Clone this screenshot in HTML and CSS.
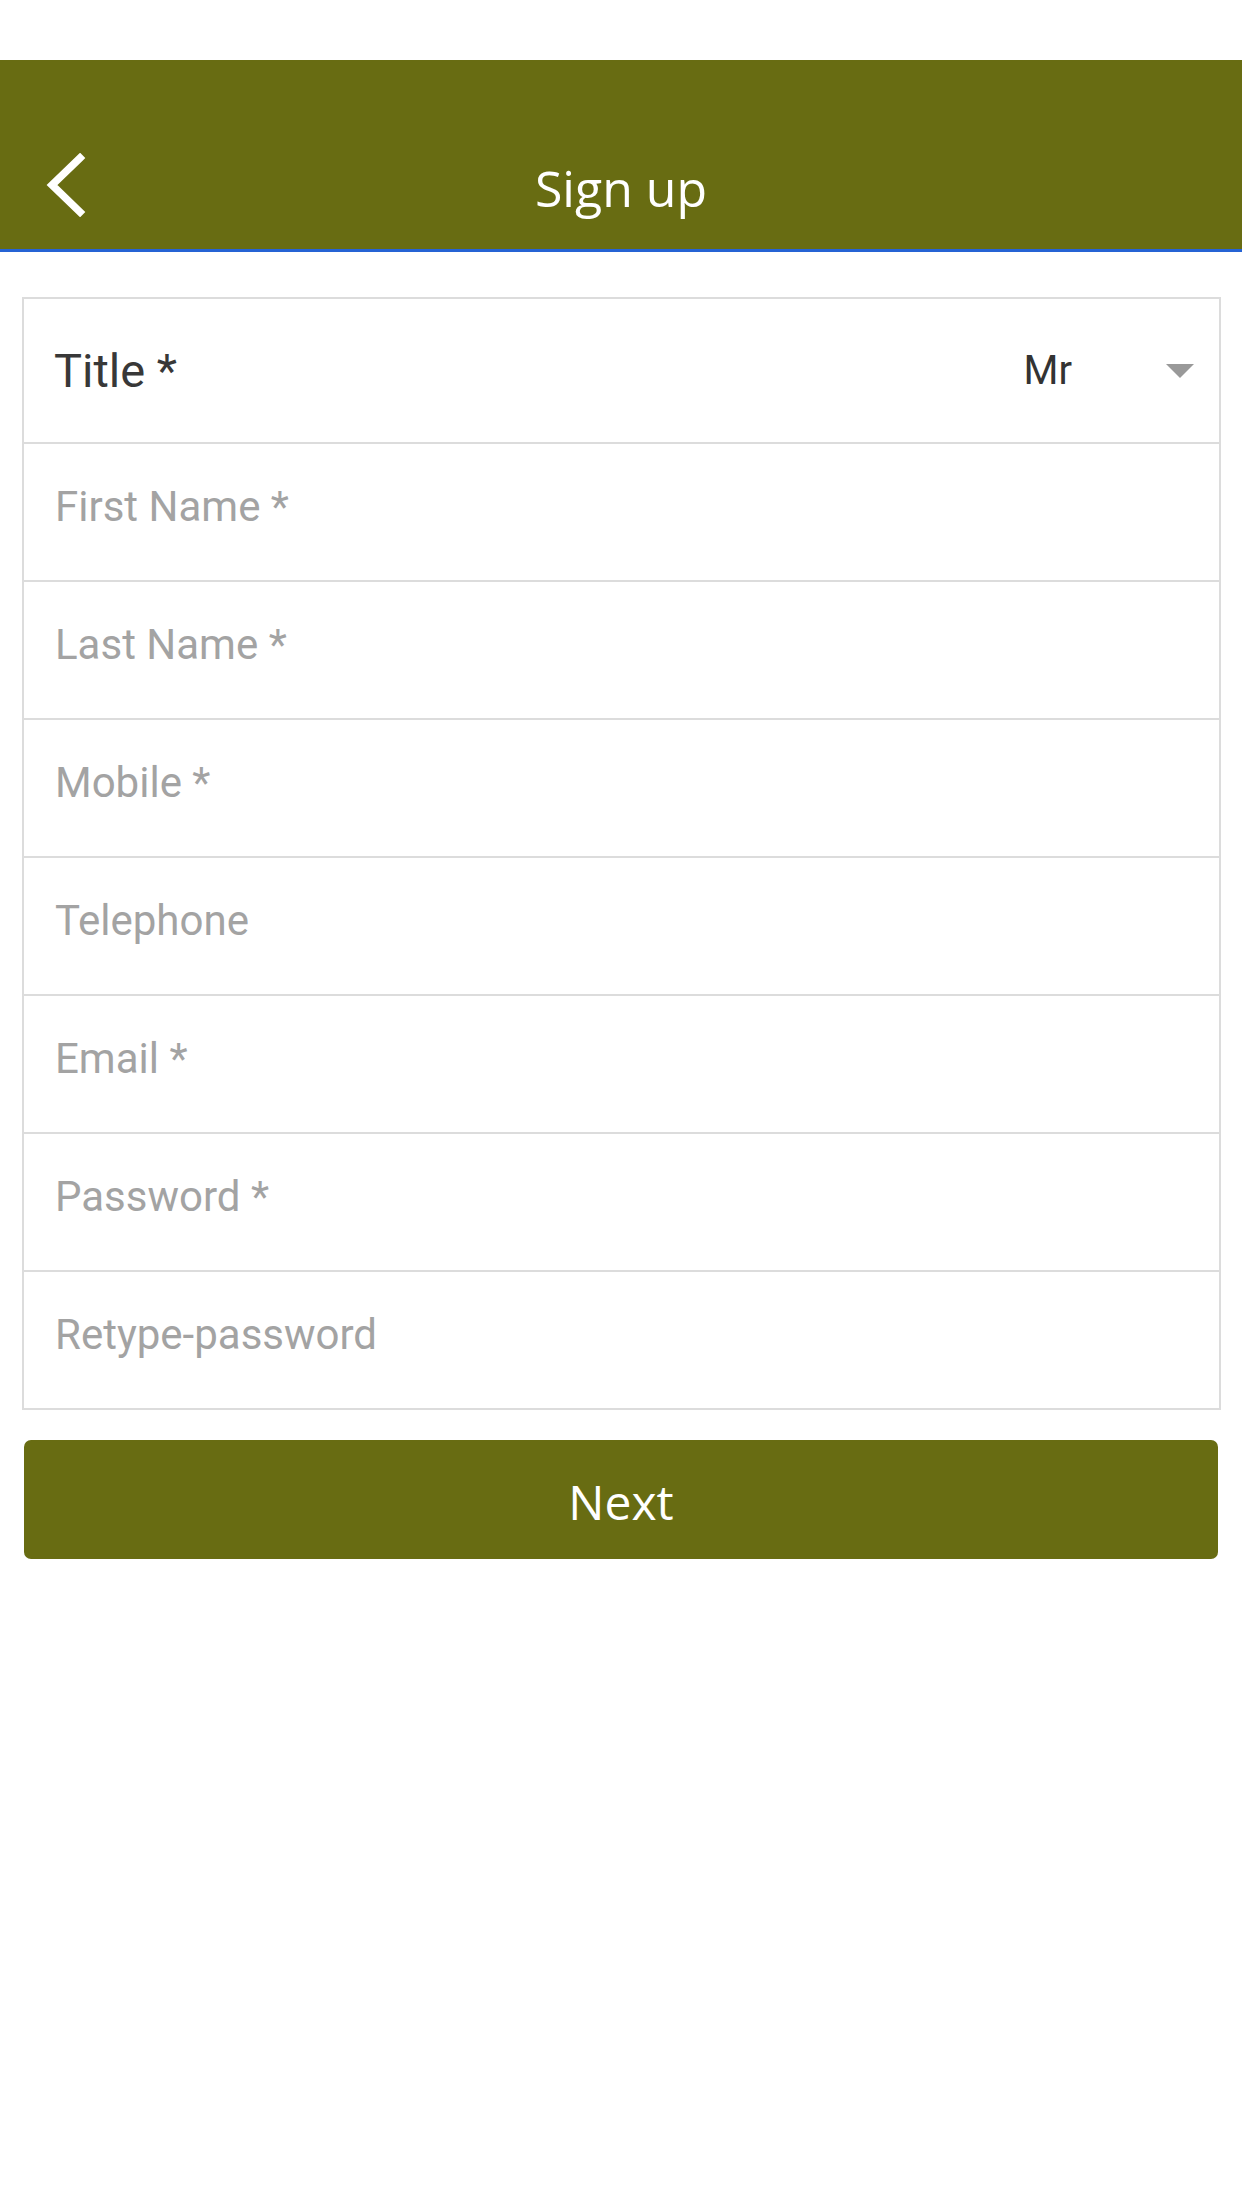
FILE: index.html
```html
<!DOCTYPE html>
<html lang="en">
<head>
<meta charset="utf-8">
<title>Sign up</title>
<link rel="stylesheet" href="styles.css">
</head>
<body>
  <div class="statusbar"></div>
  <header class="appbar">
    <div class="appbar-row">
      <button class="back" aria-label="Back">
        <svg width="40" height="64" viewBox="0 0 40 64"><polyline points="34,5 6,32 34,59" fill="none" stroke="#fff" stroke-width="7.5" stroke-linecap="square" stroke-linejoin="miter"/></svg>
      </button>
      <h1 class="appbar-title">Sign up</h1>
    </div>
  </header>
  <main class="content">
    <form class="form">
      <div class="row row-title">
        <span class="title-label">Title *</span>
        <div class="select">
          <span class="select-value">Mr</span>
          <span class="caret"></span>
        </div>
      </div>
      <div class="row"><input class="field" type="text" placeholder="First Name *"></div>
      <div class="row"><input class="field" type="text" placeholder="Last Name *"></div>
      <div class="row"><input class="field" type="tel" placeholder="Mobile *"></div>
      <div class="row"><input class="field" type="tel" placeholder="Telephone"></div>
      <div class="row"><input class="field" type="email" placeholder="Email *"></div>
      <div class="row"><input class="field" type="password" placeholder="Password *"></div>
      <div class="row"><input class="field" type="password" placeholder="Retype-password"></div>
    </form>
    <button class="next" type="button">Next</button>
  </main>
</body>
</html>
```

FILE: styles.css
```css
* { box-sizing: border-box; }
html, body {
  margin: 0;
  padding: 0;
  background: #ffffff;
  width: 1242px;
  height: 2208px;
}
body { font-family: Roboto, "Open Sans", sans-serif; }

.statusbar { height: 60px; background: #ffffff; }

.appbar {
  height: 192px;
  background: #686c12;
  border-bottom: 3px solid #2563d4;
  display: flex;
  align-items: flex-end;
}
.appbar-row {
  position: relative;
  width: 100%;
  height: 126px;
  display: flex;
  align-items: center;
  justify-content: center;
}
.back {
  position: absolute;
  left: 46px;
  top: 30px;
  background: none;
  border: 0;
  padding: 0;
  width: 40px;
  height: 64px;
  display: flex;
}
.appbar-title {
  margin: 0;
  font-family: "Open Sans", sans-serif;
  font-weight: 400;
  font-size: 50px;
  color: #ffffff;
  line-height: 1;
  padding-top: 3px;
}

.content { padding: 45px 21px 0 22px; }

.form {
  border: 2px solid #dcdcdc;
  margin: 0;
  display: flex;
  flex-direction: column;
}
.row {
  height: 138px;
  border-top: 2px solid #dcdcdc;
  display: flex;
  align-items: center;
}
.row-title {
  height: 143px;
  border-top: 0;
  padding: 0 25px 0 30px;
  justify-content: space-between;
}
.title-label {
  font-family: Roboto, sans-serif;
  font-size: 47px;
  color: #383838;
  line-height: 1;
}
.select { display: flex; align-items: center; }
.select-value {
  font-family: Roboto, sans-serif;
  font-size: 40px;
  color: #333333;
  line-height: 1;
  margin-right: 94px;
}
.caret {
  width: 0;
  height: 0;
  border-left: 14px solid transparent;
  border-right: 14px solid transparent;
  border-top: 14px solid #999999;
}

.field {
  width: 100%;
  height: 100%;
  border: 0;
  outline: none;
  background: transparent;
  padding: 0 0 12px 31px;
  font-family: Roboto, sans-serif;
  font-size: 42px;
  color: #333333;
}
.field::placeholder { color: #a3a3a3; opacity: 1; }

.next {
  display: block;
  width: 1194px;
  height: 119px;
  margin: 30px 0 0 2px;
  border: 0;
  border-radius: 7px;
  background: #686c12;
  color: #ffffff;
  font-family: "Open Sans", sans-serif;
  font-size: 48px;
  font-weight: 400;
  line-height: 1;
  padding: 4px 0 0 0;
}
```
